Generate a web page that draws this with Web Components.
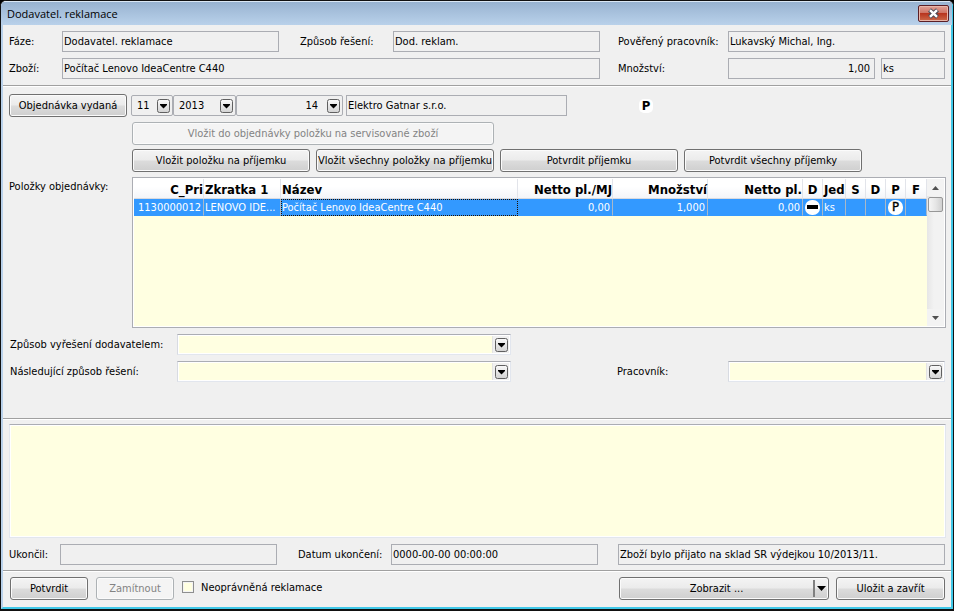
<!DOCTYPE html>
<html lang="cs">
<head>
<meta charset="utf-8">
<title>Dodavatel. reklamace</title>
<style>
html, body { margin: 0; background: #000; }
body {
  --face: #f0f0f0; --line: #abadb3; --cream: #ffffe1;
  font: 11px/13px "DejaVu Sans Condensed", "DejaVu Sans", sans-serif; color: #000;
}
.head { display: grid; grid-template-columns: 53px 217fr 114px 207fr 128px 217fr; gap: 6px 0; padding: 6px 6px 6px; align-items: center; }
.amount { grid-column: 5 / 7; display: grid; grid-template-columns: 128px 147fr 6px 64fr; align-items: center; }
.order { display: grid; grid-template-columns: 123px minmax(0, 1fr); padding: 7px 5px 0 6px; }
.number { display: grid; grid-template-columns: 42fr 63fr 107fr 3px 221fr 72px 307fr; align-items: center; margin-left: -1px; }
.actions { display: grid; grid-template-columns: repeat(4, 178fr) 78fr; gap: 4px 6px; padding: 5px 0; grid-column: 2; }
.actions .wide { grid-column: 1 / 3; }
.actions .first { grid-column: 1; }
.caption { margin-top: 3px; }
.resolve { display: grid; grid-template-columns: 168px 334fr 217px 217fr; gap: 6px 0; padding: 6px 6px 36px; align-items: center; }
.closing { display: grid; grid-template-columns: 51px 217fr 114px 207fr 20px 327fr; padding: 6px 6px 5px; align-items: center; }
.foot { display: flex; padding: 5px 6px 7px 7px; align-items: center; gap: 8px; }
.foot .low { flex: 0 0 78px; }
.foot ui-check { flex: 1; }
.foot ui-split { flex: 0 1 210px; }
.foot .save { flex: 0 1 109px; margin-left: -1px; }
</style>
</head>
<body>

<dialog-window heading="Dodavatel. reklamace">
  <section class="head">
    <ui-field label="Fáze:" value="Dodavatel. reklamace"></ui-field>
    <ui-field label="Způsob řešení:" value="Dod. reklam." style="--lead:21px"></ui-field>
    <ui-field label="Pověřený pracovník:" value="Lukavský Michal, Ing." style="--lead:18px"></ui-field>
    <ui-field label="Zboží:" value="Počítač Lenovo IdeaCentre C440" style="--span:3"></ui-field>
    <div class="amount">
      <ui-field label="Množství:" value="1,00" style="--lead:18px;--align:right"></ui-field>
      <span></span>
      <ui-field name="Jednotka" value="ks"></ui-field>
    </div>
  </section>
  <ui-rule></ui-rule>
  <section class="order">
    <ui-button style="margin-right:5px">Objednávka vydaná</ui-button>
    <div class="number">
      <ui-combo name="Řada" value="11" flat></ui-combo>
      <ui-combo name="Rok" value="2013" flat></ui-combo>
      <ui-combo name="Číslo" value="14" flat style="--align:right;--room:24px"></ui-combo>
      <span></span>
      <ui-field name="Dodavatel" value="Elektro Gatnar s.r.o."></ui-field>
      <span></span>
      <status-mark kind="bold"></status-mark>
    </div>
    <div class="actions">
      <ui-button class="wide" disabled>Vložit do objednávky položku na servisované zboží</ui-button>
      <ui-button class="first">Vložit položku na příjemku</ui-button>
      <ui-button>Vložit všechny položky na příjemku</ui-button>
      <ui-button>Potvrdit příjemku</ui-button>
      <ui-button>Potvrdit všechny příjemky</ui-button>
    </div>
    <div class="caption">Položky objednávky:</div>
    <item-grid></item-grid>
  </section>
  <section class="resolve">
    <ui-combo label="Způsob vyřešení dodavatelem:" style="--lead:1px"></ui-combo>
    <span></span><span></span>
    <ui-combo label="Následující způsob řešení:" style="--lead:1px"></ui-combo>
    <ui-combo label="Pracovník:" style="--lead:106px"></ui-combo>
  </section>
  <ui-rule></ui-rule>
  <ui-memo name="Poznámka"></ui-memo>
  <section class="closing">
    <ui-field label="Ukončil:" value=""></ui-field>
    <ui-field label="Datum ukončení:" value="0000-00-00 00:00:00" style="--lead:21px"></ui-field>
    <span></span>
    <ui-field name="Stav" value="Zboží bylo přijato na sklad SR výdejkou 10/2013/11."></ui-field>
  </section>
  <ui-rule></ui-rule>
  <footer class="foot">
    <ui-button class="low">Potvrdit</ui-button>
    <ui-button class="low" disabled>Zamítnout</ui-button>
    <ui-check>Neoprávněná reklamace</ui-check>
    <ui-split>Zobrazit ...</ui-split>
    <ui-button class="save">Uložit a zavřít</ui-button>
  </footer>
</dialog-window>

<script>
const base = '*{box-sizing:border-box}button,input,select,textarea{font:inherit;color:inherit;margin:0}';
const esc = s => (s || '').replace(/[&<>"]/g, c => '&#' + c.charCodeAt(0) + ';');
const define = (name, render) => customElements.define(name, class extends HTMLElement {
  connectedCallback() {
    if (this.shadowRoot) return;
    this.attachShadow({ mode: 'open' }).innerHTML = render(this);
  }
});
const labelled = el => {
  const text = el.getAttribute('label');
  return {
    label: text ? `<label for="c">${esc(text)}</label>` : '',
    aria: text ? '' : `aria-label="${esc(el.getAttribute('name'))}"`
  };
};
const labelCss = 'label{padding-left:var(--lead,0);white-space:nowrap}';
const buttonFace = 'linear-gradient(#f4f4f4 0,#ebebeb 48%,#dcdcdc 52%,#cfcfcf 100%)';

define('dialog-window', el => `
  <style>${base}
    :host{display:flex;flex-direction:column;min-height:100vh;box-sizing:border-box;background:var(--face);
      border:solid #111;border-width:1px 1px 2px 1px;border-radius:6px 6px 0 0;overflow:hidden}
    header{display:flex;align-items:center;justify-content:space-between;height:24px;padding:0 3px 0 6px;
      background:linear-gradient(#98b3d1,#b9d1ea);border-top:1px solid #dbe8f5;border-right:1px solid #40c8e8}
    h1{margin:0;font:11px/16px "Open Sans","Noto Sans",sans-serif}
    header button{display:grid;place-items:center;width:31px;height:17px;padding:0;border:1px solid #5b1f26;border-radius:2px;
      background:linear-gradient(#e0a196 0,#cf7566 45%,#b8351f 50%,#cc6a4a 100%);box-shadow:inset 0 0 0 1px #e8b5a8}
    main{flex:1;display:flex;flex-direction:column;border:solid;border-width:0 2px 2px;
      border-color:#b9d1ea #40c8e8 #40c8e8 #b9d1ea}
  </style>
  <header><h1>${esc(el.getAttribute('heading'))}</h1>
    <button aria-label="Zavřít"><svg width="13" height="11" viewBox="0 0 13 11" fill="none">
      <path d="M2.500 2l8 7M10.500 2l-8 7" stroke="#4d4d58" stroke-width="4.400"/>
      <path d="M3 2.200l7 6.600M10 2.200l-7 6.600" stroke="#fff" stroke-width="2.400"/></svg></button></header>
  <main><slot></slot></main>`);

define('ui-rule', () => `<style>:host{display:block;height:2px;background:linear-gradient(#a0a0a0 50%,#fff 50%)}</style>`);

define('ui-field', el => {
  const l = labelled(el);
  return `<style>${base}${labelCss}
    :host{display:contents}
    input{display:block;width:100%;min-width:0;height:21px;padding:0 4px 0 1px;border:1px solid var(--line);border-radius:0;
      background:var(--face);outline:0;text-align:var(--align,left);grid-column-end:span var(--span,1)}
  </style>${l.label}<input id="c" readonly ${l.aria} value="${esc(el.getAttribute('value'))}">`;
});

define('ui-combo', el => {
  const l = labelled(el), flat = el.hasAttribute('flat');
  return `<style>${base}${labelCss}
    :host{display:contents}
    .box{display:grid;grid-template-columns:minmax(0,1fr) 17px;align-items:center;height:21px;
      border:1px solid #e2e6ee;border-top-color:var(--line);border-left-color:#d8dbe2;background:var(--face);box-shadow:inset 0 0 0 1px #fff}
    .flat{border-color:var(--line);border-radius:2px;box-shadow:none}
    select{grid-area:1/1/2/3;appearance:none;width:100%;height:17px;border:0;border-radius:0;padding:0 var(--room,16px) 0 5px;outline:0;
      background:transparent;text-align-last:var(--align,left)}
    .cream{grid-area:1/1;height:17px;margin-left:1px;background:var(--cream);border-right:1px solid #e3e3e3}
    svg{grid-area:1/2;margin-left:2px;pointer-events:none;z-index:1}
  </style>${l.label}<div class="box${flat ? ' flat' : ''}">
    ${flat ? '' : '<span class="cream"></span>'}
    <select id="c" ${l.aria}><option>${esc(el.getAttribute('value'))}</option></select>
    <svg width="13" height="14"><defs><linearGradient id="g" x2="0" y2="1"><stop stop-color="#fafafa"/><stop offset="1" stop-color="#d2d2d2"/></linearGradient></defs>
      <rect x=".5" y=".5" width="12" height="13" rx="2" fill="url(#g)" stroke="#606060"/><path d="M3 5h7v1L6.500 9.500 3 6z" fill="#000"/></svg></div>`;
});

define('ui-button', el => `<style>${base}
    :host{display:block;min-width:0}
    button{display:block;width:100%;height:23px;padding:0;border:1px solid #707070;border-radius:3px;white-space:nowrap;
      background:${buttonFace};box-shadow:inset 0 0 0 1px #fbfbfb}
    button:disabled{border-color:#adb2b5;background:#f4f4f4;color:#838383}
  </style><button ${el.hasAttribute('disabled') ? 'disabled' : ''}><slot></slot></button>`);

define('ui-split', () => `<style>${base}
    :host{display:flex;height:23px;box-sizing:border-box;border:1px solid #707070;border-radius:3px;background:${buttonFace};box-shadow:inset 0 0 0 1px #fbfbfb}
    button{border:0;background:none;padding:0}
    .main{flex:1}
    .more{width:15px;display:grid;place-items:center;border-left:2px solid #808080;margin:2px 0}
  </style><button class="main"><slot></slot></button>
  <button class="more" aria-label="Další volby"><svg width="9" height="5"><path d="M0 0h9L4.500 5z"/></svg></button>`);

define('ui-check', () => `<style>${base}
    :host{display:block}
    label{display:inline-flex;align-items:center;gap:7px;white-space:nowrap}
    input{appearance:none;width:12px;height:12px;border:1px solid #8e8f8f;background:var(--cream);box-shadow:inset 0 0 0 1px #f4f4f4}
    input:checked{background:#456}
  </style><label><input type="checkbox"><slot></slot></label>`);

define('ui-memo', el => `<style>${base}
    :host{display:flex;flex:1;padding:4px 5px 0 6px}
    textarea{flex:1;resize:none;min-height:60px;border:1px solid #e2e6ee;border-top-color:var(--line);background:var(--cream);
      box-shadow:inset 0 0 0 1px #fff;outline:0;border-radius:0}
  </style><textarea aria-label="${esc(el.getAttribute('name'))}"></textarea>`);

define('status-mark', el => {
  const kind = el.getAttribute('kind');
  return `<style>
    :host{display:grid;place-items:center;width:14px;height:14px;border-radius:5px;background:#fff;color:#000;
      font:${kind === 'bold' ? 'bold ' : ''}13px/14px "DejaVu Sans Condensed","DejaVu Sans",sans-serif}
    :host([kind=plain]),:host([kind=minus]){border-radius:7px;width:15px;height:15px;-webkit-text-stroke:0.4px #000}
  </style>${kind === 'minus' ? '<svg width="11" height="4"><rect width="11" height="4"/></svg>' : 'P'}`;
});

define('scroll-bar', () => `<style>${base}
    :host{display:flex;flex-direction:column;background:linear-gradient(90deg,#e6e6e6,#f2f2f2 40%)}
    button{border:0;padding:0;height:17px;background:#f3f3f3;display:grid;place-items:center}
    .track{flex:1;padding:1px}
    .thumb{height:15px;border:1px solid #979797;border-radius:2px;background:linear-gradient(90deg,#f5f5f5,#e6e6e6 50%,#d0d0d0)}
  </style><button aria-label="Nahoru"><svg width="7" height="4"><path d="M0 4h7L3.500 0z" fill="#505050"/></svg></button>
  <div class="track"><div class="thumb"></div></div>
  <button aria-label="Dolů"><svg width="7" height="4"><path d="M0 0h7L3.500 4z" fill="#505050"/></svg></button>`);

define('item-grid', () => {
  const cols = [
    [70, 'C_Pri', '1130000012', 'r'], [77, 'Zkratka 1', 'LENOVO IDE...', ''], [237, 'Název', 'Počítač Lenovo IdeaCentre C440', 'focus'],
    [95, 'Netto pl./MJ', '0,00', 'r'], [95, 'Množství', '1,000', 'r'], [95, 'Netto pl.', '0,00', 'r'],
    [20, 'D', '<status-mark kind="minus"></status-mark>', 'c'], [23, 'Jed', 'ks', ''], [20, 'S', '', 'c'], [20, 'D', '', 'c'],
    [20, 'P', '<status-mark kind="plain"></status-mark>', 'c'], [21, 'F', '', 'c']];
  const total = cols.reduce((s, c) => s + c[0], 0);
  return `<style>${base}
    :host{display:flex;height:151px;box-sizing:border-box;border:1px solid var(--line);background:#fff;padding:1px}
    .view{flex:1;min-width:0;background:var(--cream)}
    scroll-bar{flex:0 0 17px}
    table{width:100%;table-layout:fixed;border-collapse:separate;border-spacing:0}
    th{height:20px;padding:2px 0 0 1px;font-size:13px;line-height:16px;text-align:left;white-space:nowrap;
      background:linear-gradient(#fff 40%,#f3f5f9);border-right:1px solid #e2e4ea;border-bottom:1px solid #d8dae0}
    td{height:17px;padding:1px 0 0 1px;white-space:nowrap;background:#3399ff;color:#fff;border-right:1px solid #a9b8c8;border-bottom:1px solid #3399ff}
    .r{text-align:right}td.r{padding-right:2px}
    .c{text-align:center;padding-left:0}
    td.c{padding-top:0}
    td.c status-mark{margin:0 auto}
    td.focus{border:1px dotted #201000;padding:0}
  </style><div class="view"><table>
    <colgroup>${cols.map(c => `<col style="width:${(c[0] / total * 100).toFixed(3)}%">`).join('')}</colgroup>
    <thead><tr>${cols.map(c => `<th scope="col" class="${c[3] === 'focus' ? '' : c[3]}">${c[1]}</th>`).join('')}</tr></thead>
    <tbody><tr>${cols.map(c => `<td class="${c[3]}">${c[2]}</td>`).join('')}</tr></tbody>
  </table></div><scroll-bar></scroll-bar>`;
});
</script>
</body>
</html>
